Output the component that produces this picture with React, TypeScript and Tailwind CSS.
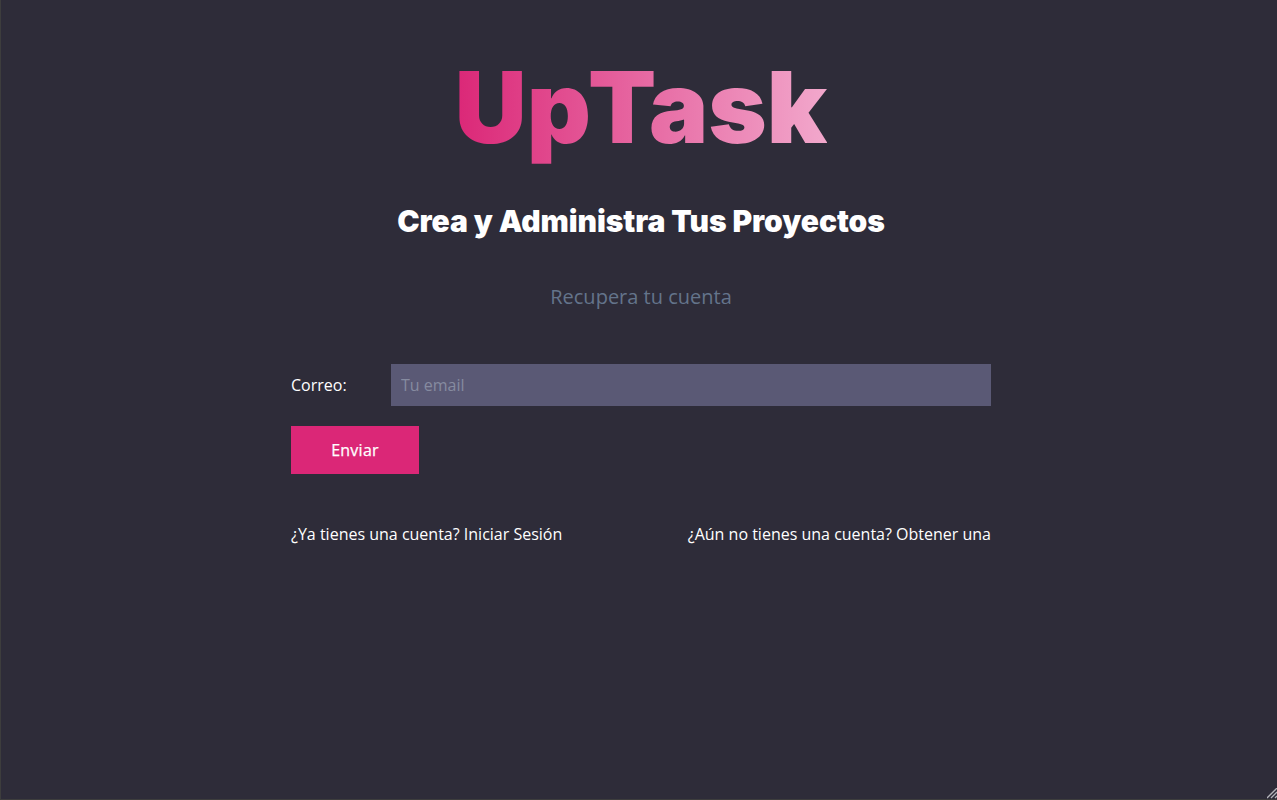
export default function App() {
  return (
    <main className="relative flex h-[800px] flex-col items-center overflow-hidden border-b border-l border-[#3d3d3d] bg-[#2e2c39] pl-[4px] font-['Open_Sans',sans-serif] text-base text-white">
      <h1 className="mt-[47px] bg-linear-to-r/srgb from-[#db2777] to-[#f2a8cc] bg-clip-text font-['Inter',sans-serif] text-[99.5px] leading-[120px] font-black text-transparent">
        <span>Up</span><span className="ml-[-3px]">Task</span>
      </h1>
      <p className="mt-[30px] font-['Inter',sans-serif] text-[30px] leading-[48px] font-black tracking-[-0.06px]">Crea y Administra Tus Proyectos</p>
      <p className="mt-[36px] text-[20px] leading-[32px] text-[#64748b]">Recupera tu cuenta</p>
      <form className="mt-[51px] w-[700px]" onSubmit={(e) => e.preventDefault()}>
        <div className="flex items-center">
          <label htmlFor="email" className="w-[100px]">Correo:</label>
          <input id="email" type="email" placeholder="Tu email" className="h-[42px] flex-1 bg-[#5a5975] px-[10px] outline-none placeholder:text-[#868ba0]" />
        </div>
        <button className="mt-5 h-12 w-32 bg-[#db2777] tracking-[0.25px] [-webkit-text-stroke:0.25px_white]">Enviar</button>
      </form>
      <nav className="mt-12 flex w-[700px] justify-between leading-6">
        <a href="#">¿Ya tienes una cuenta? Iniciar Sesión</a>
        <a href="#">¿Aún no tienes una cuenta? Obtener una</a>
      </nav>
      <svg className="absolute right-0 bottom-0" width="10" height="11" viewBox="0 0 10 11" stroke="#b4b4ba" fill="none" strokeWidth="1.3">
        <path d="M0 10 10 0M4 10 10 4M8 10 10 8" />
      </svg>
    </main>
  );
}
